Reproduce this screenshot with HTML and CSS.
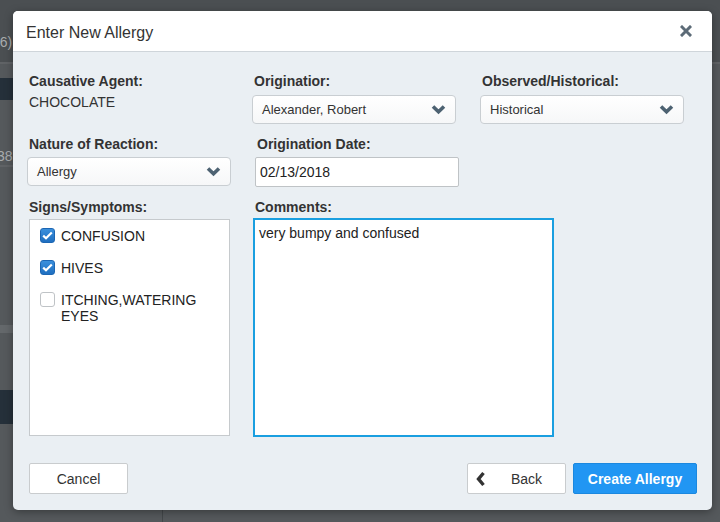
FILE: index.html
```html
<!DOCTYPE html>
<html lang="en">
<head>
<meta charset="utf-8">
<title>Enter New Allergy</title>
<link rel="stylesheet" href="styles.css">
</head>
<body>
<div class="page">
  <div class="backdrop">
    <div class="bg-header"><span class="bg-count">(6)</span></div>
    <div class="bg-line"></div>
    <div class="bg-gap"></div>
    <div class="bg-navy"></div>
    <div class="bg-row"><span class="bg-num">38</span></div>
    <div class="bg-line bg-line-left"></div>
    <div class="bg-fill"></div>
    <div class="bg-band"></div>
    <div class="bg-fill2"></div>
    <div class="bg-navy bg-navy-tall"></div>
    <div class="bg-rest"><div class="bg-split"></div></div>
  </div>

  <div class="modal">
    <header class="modal-header">
      <h1 class="modal-title">Enter New Allergy</h1>
      <button class="close-btn" aria-label="Close">
        <svg width="12" height="12" viewBox="0 0 12 12"><path d="M2 2 L10 10 M10 2 L2 10" stroke="#5c6b77" stroke-width="3" stroke-linecap="square"/></svg>
      </button>
    </header>

    <div class="modal-body">
      <div class="form-grid">
        <div class="field">
          <div class="label">Causative Agent:</div>
          <div class="value">CHOCOLATE</div>
        </div>
        <div class="field">
          <div class="label">Originatior:</div>
          <div class="select"><span>Alexander, Robert</span>
            <svg class="chev" width="15" height="11" viewBox="0 0 15 11"><path d="M2 2.5 L7.5 7.8 L13 2.5" fill="none" stroke="#4d6272" stroke-width="3.6"/></svg>
          </div>
        </div>
        <div class="field">
          <div class="label">Observed/Historical:</div>
          <div class="select"><span>Historical</span>
            <svg class="chev" width="15" height="11" viewBox="0 0 15 11"><path d="M2 2.5 L7.5 7.8 L13 2.5" fill="none" stroke="#4d6272" stroke-width="3.6"/></svg>
          </div>
        </div>

        <div class="field">
          <div class="label">Nature of Reaction:</div>
          <div class="select"><span>Allergy</span>
            <svg class="chev" width="15" height="11" viewBox="0 0 15 11"><path d="M2 2.5 L7.5 7.8 L13 2.5" fill="none" stroke="#4d6272" stroke-width="3.6"/></svg>
          </div>
        </div>
        <div class="field field-date">
          <div class="label">Origination Date:</div>
          <div class="text-input">02/13/2018</div>
        </div>
        <div class="field"></div>

        <div class="field">
          <div class="label">Signs/Symptoms:</div>
          <div class="checklist">
            <div class="check-item">
              <span class="checkbox checked"><svg width="11" height="9" viewBox="0 0 11 9"><path d="M1.2 4.6 L4 7.3 L9.8 1.5" fill="none" stroke="#fff" stroke-width="2.2"/></svg></span>
              <span class="check-text">CONFUSION</span>
            </div>
            <div class="check-item">
              <span class="checkbox checked"><svg width="11" height="9" viewBox="0 0 11 9"><path d="M1.2 4.6 L4 7.3 L9.8 1.5" fill="none" stroke="#fff" stroke-width="2.2"/></svg></span>
              <span class="check-text">HIVES</span>
            </div>
            <div class="check-item">
              <span class="checkbox"></span>
              <span class="check-text">ITCHING,WATERING EYES</span>
            </div>
          </div>
        </div>
        <div class="field field-comments">
          <div class="label">Comments:</div>
          <div class="textarea">very bumpy and confused</div>
        </div>
      </div>
    </div>

    <footer class="modal-footer">
      <button class="btn btn-cancel">Cancel</button>
      <div class="footer-right">
        <button class="btn btn-back">
          <svg class="back-chev" width="10" height="16" viewBox="0 0 10 16"><path d="M7.5 2 L2.5 8 L7.5 14" fill="none" stroke="#333" stroke-width="3.4"/></svg>
          <span>Back</span>
        </button>
        <button class="btn btn-primary">Create Allergy</button>
      </div>
    </footer>
  </div>
</div>
</body>
</html>
```

FILE: styles.css
```css
* { box-sizing: border-box; }

html, body {
  margin: 0;
  padding: 0;
}

body {
  width: 720px;
  height: 522px;
  overflow: hidden;
  font-family: "Liberation Sans", Arial, Helvetica, sans-serif;
  color: #333;
  background: #55595c;
}

.page {
  position: relative;
  width: 720px;
  height: 522px;
}

/* ---------- backdrop (dimmed page behind the modal) ---------- */
.backdrop {
  display: flex;
  flex-direction: column;
  height: 522px;
}
.bg-header {
  height: 62px;
  background: #4b4f52;
  padding-top: 34px;
  font-size: 14px;
  color: #a9acae;
}
.bg-count { margin-left: -5px; }
.bg-line { height: 2px; background: #606366; }
.bg-line-left { width: 160px; }
.bg-gap { height: 14px; }
.bg-navy { height: 22px; width: 160px; background: #25303a; }
.bg-navy-tall { height: 34px; }
.bg-row {
  height: 65px;
  padding-top: 48px;
  font-size: 14px;
  color: #a9acae;
}
.bg-num { margin-left: -3px; }
.bg-fill { height: 158px; }
.bg-band { height: 8px; width: 160px; background: #64686b; }
.bg-fill2 { height: 57px; }
.bg-rest {
  flex: 1;
  display: flex;
}
.bg-split {
  width: 163px;
  border-right: 1px solid #43474a;
}

/* ---------- modal ---------- */
.modal {
  position: absolute;
  left: 13px;
  top: 11px;
  width: 699px;
  height: 499px;
  background: #eaeff3;
  border-radius: 5px;
  box-shadow: 0 2px 8px rgba(0, 0, 0, 0.35);
  display: flex;
  flex-direction: column;
  overflow: hidden;
}

.modal-header {
  height: 41px;
  background: #fff;
  border-bottom: 1px solid #cfd5da;
  display: flex;
  align-items: center;
  justify-content: space-between;
  padding: 3px 20px 0 13px;
}
.modal-title {
  margin: 0;
  font-size: 16px;
  font-weight: normal;
  color: #333;
}
.close-btn {
  border: 0;
  background: none;
  padding: 0;
  width: 12px;
  height: 12px;
  margin-top: -3px;
  display: flex;
}

.modal-body {
  padding: 19px 0 0 14px;
}

.form-grid {
  display: grid;
  grid-template-columns: 225px 228px 204px;
  row-gap: 10px;
}

.field {
  display: flex;
  flex-direction: column;
  align-items: flex-start;
}

.label {
  font-size: 14px;
  font-weight: bold;
  line-height: 20px;
  color: #333;
  padding-left: 2px;
  margin-bottom: 4px;
}

.value {
  font-size: 14px;
  line-height: 20px;
  margin-top: -3px;
  padding-left: 2px;
}

.select {
  width: 204px;
  height: 29px;
  border: 1px solid #c9ced2;
  border-radius: 4px;
  background: linear-gradient(#ffffff, #f6f7f8);
  display: flex;
  align-items: center;
  justify-content: space-between;
  padding: 0 9px 0 9px;
  font-size: 13px;
  color: #333;
}
.chev { display: block; }

.form-grid > .field:nth-child(n+4) .label { margin-bottom: 3px; }

.field-date { padding-left: 3px; }
.text-input {
  width: 204px;
  height: 30px;
  border: 1px solid #bfc3c6;
  border-radius: 2px;
  background: #fff;
  font-size: 14px;
  line-height: 28px;
  padding-left: 4px;
  color: #222;
}

.checklist {
  width: 201px;
  height: 217px;
  margin-left: 2px;
  margin-top: -1px;
  background: #fff;
  border: 1px solid #c6cacd;
  padding: 8px 0 0 10px;
  display: flex;
  flex-direction: column;
  gap: 16px;
}
.check-item {
  display: flex;
  align-items: flex-start;
  gap: 6px;
}
.checkbox {
  flex: none;
  width: 15px;
  height: 15px;
  border-radius: 3px;
  border: 1px solid #bfc3c6;
  background: #fff;
  display: flex;
  align-items: center;
  justify-content: center;
}
.checkbox.checked {
  background: linear-gradient(#3a8fdc, #1f6fc0);
  border-color: #1c66b3;
}
.check-text {
  font-size: 14px;
  line-height: 16px;
  color: #222;
  width: 150px;
}

.field-comments {
  padding-left: 1px;
}
.field-comments .label { padding-left: 2px; }
.form-grid > .field.field-comments .label { margin-bottom: 1px; }
.textarea {
  width: 301px;
  height: 219px;
  background: #fff;
  border: 2px solid #1a9fe0;
  font-size: 14px;
  line-height: 18px;
  padding: 4px 4px;
  color: #222;
}

/* ---------- footer ---------- */
.modal-footer {
  margin-top: auto;
  padding: 0 15px 16px 16px;
  display: flex;
  justify-content: space-between;
  align-items: flex-end;
}
.footer-right {
  display: flex;
  gap: 7px;
}
.btn {
  height: 31px;
  font-family: "Liberation Sans", Arial, Helvetica, sans-serif;
  font-size: 14px;
  border-radius: 2px;
  cursor: pointer;
}
.btn-cancel, .btn-back {
  width: 99px;
  background: #fff;
  border: 1px solid #c9ccce;
  color: #333;
}
.btn-back {
  display: flex;
  align-items: center;
  padding: 0 0 0 8px;
}
.btn-back span {
  flex: 1;
  text-align: center;
  padding-left: 2px;
}
.back-chev { display: block; }
.btn-primary {
  width: 124px;
  background: #2196f3;
  border: 1px solid #1b88df;
  color: #fff;
  font-weight: bold;
}
```
